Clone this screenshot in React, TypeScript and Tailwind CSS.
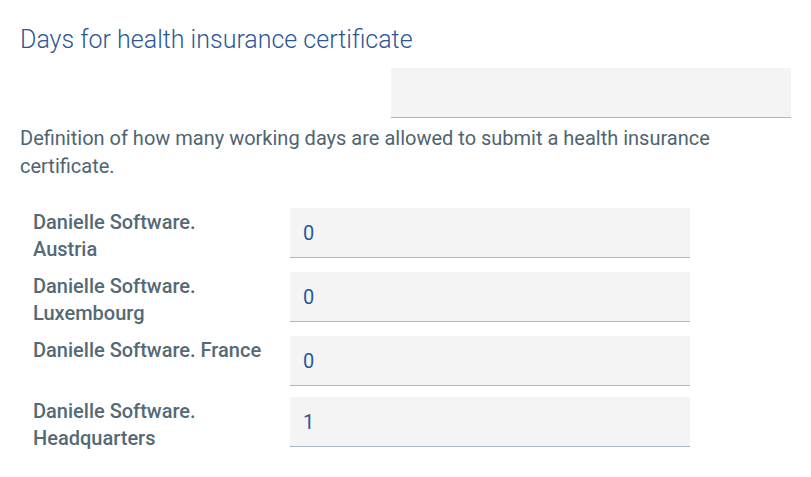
const rows = [
  { name: "Danielle Software. Austria", value: "0" },
  { name: "Danielle Software. Luxembourg", value: "0" },
  { name: "Danielle Software. France", value: "0" },
  { name: "Danielle Software. Headquarters", value: "1" },
]

export default function App() {
  return (
    <div className="min-h-screen bg-white font-['Roboto',sans-serif] pt-[24px] pl-[20px] pr-[20px]">
      {/* Heading */}
      <h2 className="text-[25px] leading-[32px] font-light text-[#2c5797]">
        Days for health insurance certificate
      </h2>

      {/* Global field */}
      <div className="flex justify-end mt-[12px]">
        <div className="w-[400px] h-[50px] bg-[#f4f4f4] border-b border-[#a9b7c6]" />
      </div>

      <p className="mt-[6px] text-[20px] leading-[28px] text-[#4f6470] max-w-[740px]">
        Definition of how many working days are allowed to submit a health insurance certificate.
      </p>

      {/* Per company */}
      <div className="mt-[28px] pl-[13px] flex flex-col gap-[11px]">
        {rows.map((row) => (
          <div key={row.name} className="flex items-start">
            <div className="w-[230px] shrink-0 mr-[27px] mt-[1px] mb-[-2px] text-[20px] leading-[27px] font-medium text-[#546a76]">
              {row.name}
            </div>
            <div className="w-[400px] h-[50px] bg-[#f4f4f4] border-b border-[#a9b7c6] flex items-center px-[13px] pt-[1px] text-[20px] text-[#2a5a9c]">
              {row.value}
            </div>
          </div>
        ))}
      </div>
    </div>
  )
}
